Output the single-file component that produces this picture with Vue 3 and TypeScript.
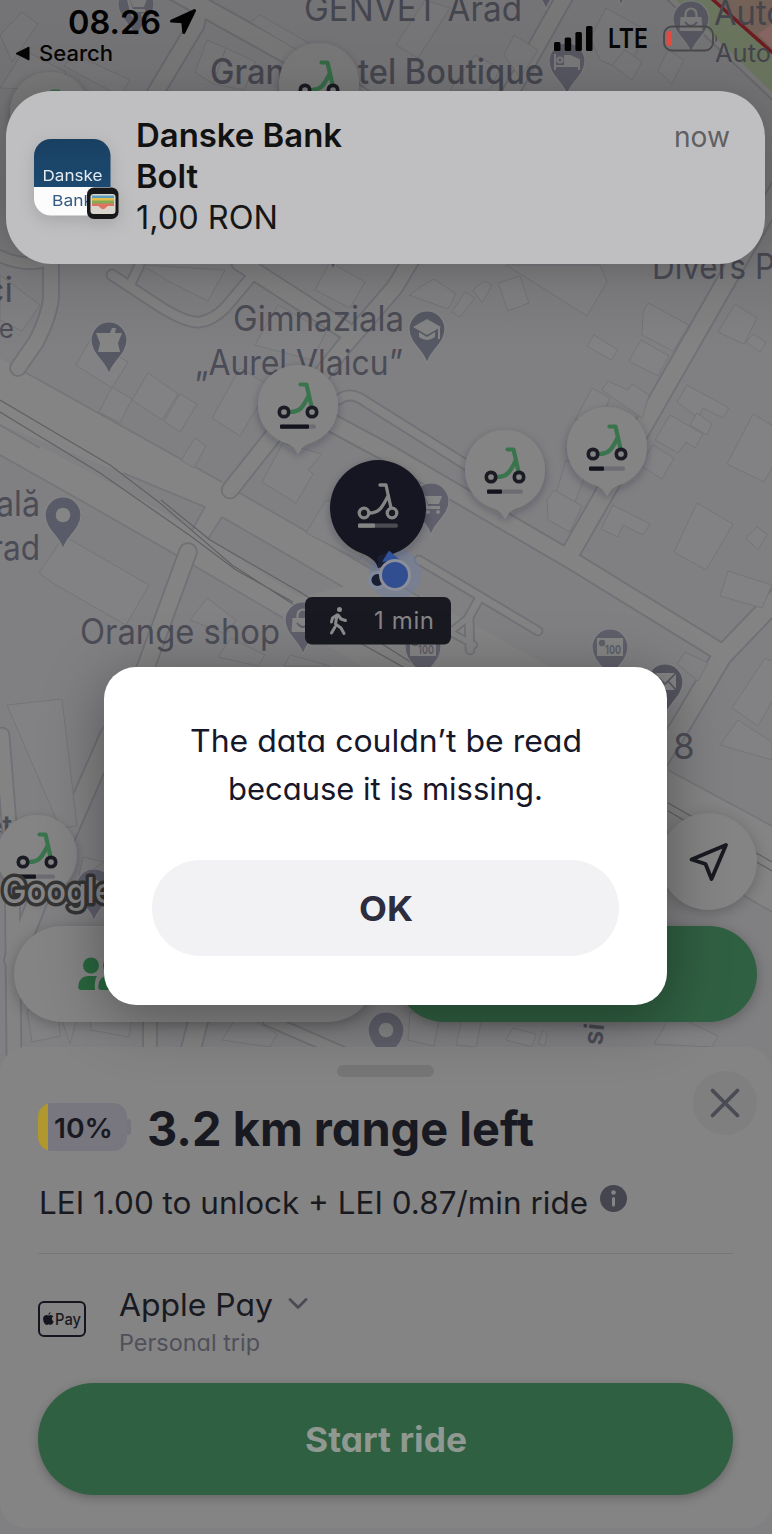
<script setup lang="ts">
import { h, type FunctionalComponent } from 'vue'

interface FitProps {
  text: string
  w: number
  size: number
  weight?: number
  box?: number
  color?: string
  geo?: boolean
}

// A single line of text fitted to a fixed width, with its capitals centred in the box
const FitText: FunctionalComponent<FitProps> = (p) => {
  const box = p.box ?? 40
  return h(
    'svg',
    { width: p.w, height: box, viewBox: `0 0 ${p.w} ${box}`, style: { display: 'block', overflow: 'visible', flex: 'none' } },
    [
      h(
        'text',
        {
          x: 0,
          y: box / 2 + p.size * 0.3636 + (p.geo === false ? 0 : 0.7),
          textLength: p.w,
          lengthAdjust: 'spacingAndGlyphs',
          'font-size': p.size,
          'font-weight': p.weight ?? 400,
          fill: p.color ?? '#191921',
          style: { fontFamily: 'Inter, "Liberation Sans", sans-serif', fontFeatureSettings: p.geo === false ? 'normal' : '"cv11"' },
        },
        p.text,
      ),
    ],
  )
}
FitText.props = { text: String, w: Number, size: Number, weight: Number, box: Number, color: String, geo: { type: Boolean, default: true } } as any

interface Road { d: string; w: number }
const roads: Road[] = [
  { d: 'M172 -10L345 86L440 150', w: 17 },
  { d: 'M205 -20L196 25L157 90L120 160', w: 15 },
  { d: 'M565 -4L519 78L395 287L345 345L230 490', w: 15 },
  { d: 'M240 262L345 330', w: 16 },
  { d: 'M51 250V296Q50 315 36 342L18 368', w: 14 },
  { d: 'M0 256Q20 266 42 262', w: 10 },
  { d: 'M112 275L150 300Q185 324 200 322Q213 320 225 308L252 276', w: 9 },
  { d: 'M130 285L141 262', w: 8 },
  { d: 'M790 170L728 278L642 428L571 552', w: 17 },
  { d: 'M670 -10L780 95', w: 16 },
  { d: 'M280 395L386 452L571 560L722 653', w: 16 },
  { d: 'M338 400Q350 390 366 402L468 466', w: 8 },
  { d: 'M790 585L722 656L681 725L640 790', w: 18 },
  { d: 'M188 552L144 672', w: 16 },
  { d: 'M419 560L538 631', w: 7 },
  { d: 'M479 599L469 617L470 650', w: 7 },
  { d: 'M469 617L450 632L474 645', w: 5 },
  { d: 'M2 735L12 860L14 1060', w: 13 },
  { d: 'M110 735L40 895L14 960', w: 18 },
  { d: 'M150 1014V1060', w: 12 },
  { d: 'M200 1014L188 1060', w: 18 },
  { d: 'M268 1020L360 1060', w: 10 },
]

const buildings: string[] = [
  '0,35 22,12 38,24 12,62', '64,66 74,54 130,80 120,96', '0,88 24,50 66,72 60,90',
  '207,40 226,48 213,84 195,72', '226,48 256,62 244,90 213,84', '250,22 260,15 335,58 330,70',
  '396,45 425,0 450,8 418,58', '504,55 514,35 538,50 520,78', '590,38 606,8 645,30 628,72 600,60',
  '612,65 625,50 642,62 632,80', '658,70 668,50 684,60 672,84', '450,90 475,55 500,68 490,90',
  '76,365 90,340 128,362 112,388', '99,412 112,387 132,399 120,423',
  '132,400 148,373 178,394 162,420', '164,421 180,394 197,404 180,432', '212,418 240,368 270,386 240,436',
  '181,460 195,438 206,446 194,468', '262,482 283,443 322,454 308,470 313,474 296,503',
  '142,265 225,270 208,301 170,282', '315,290 330,262 365,282 350,308', '255,345 278,305 326,332 312,360',
  '0,275 40,305 22,331 0,320', '409,295 422,286 434,279 456,294 448,309',
  '452,312 465,292 475,298 460,317', '473,290 484,281 492,285 482,303',
  '498,283 520,276 529,303 508,311', '506,265 600,265 607,282 587,316', '587,346 594,335 618,350 611,360',
  '643,312 648,303 689,325 673,351 642,335', '629,361 641,340 669,356 658,376',
  '602,390 608,381 628,390 632,384 649,395 642,418 616,400', '575,420 592,388 610,398 602,416',
  '718,332 735,304 757,318 744,344', '746,342 753,334 766,342 760,352',
  '677,402 687,385 729,408 723,418 703,408 698,418', '655,440 670,415 703,434 695,448 686,442 678,453',
  '690,425 697,413 712,424 707,435', '640,465 653,445 674,458 662,479', '727,464 753,414 790,436 764,482',
  '556,494 566,460 588,468 575,502', '547,500 554,490 582,506 570,532 548,520',
  '601,529 613,505 650,524 643,535 623,525 618,537', '674,552 697,503 733,524 706,570',
  '746,538 757,527 767,534 758,550', '720,596 728,571 772,585 762,608',
  '677,664 685,652 708,663 698,681', '732,708 765,658 790,670 758,726', '720,745 738,720 772,742 772,760',
  '39,573 64,536 149,585 126,625 56,585', '190,620 207,598 236,620 226,634',
  '218,657 231,638 265,655 258,666', '284,666 290,655 330,666',
  '7,705 62,699 77,826 60,828', '78,880 83,857 104,862', '27,1010 58,1012 60,1036 32,1042',
  '90,1014 132,1014 129,1037 91,1030', '222,1040 240,1012 277,1034 270,1047', '60,1014 78,1014 70,1044',
  '408,1040 410,1012 440,1014 434,1046', '456,1045 463,1015 482,1018 476,1047',
  '506,1040 513,1028 536,1034 532,1047', '538,1044 543,1030 547,1034 545,1046',
  '654,1044 672,1014 718,1036 712,1047', '306,533 326,500 378,518 360,560',
]

interface Poi { x: number; y: number; k: string; c?: string }
const pois: Poi[] = [
  { x: 136, y: 4, k: 'cart', c: '#62636d' },
  { x: 546, y: -25, k: '' }, { x: 621, y: -29, k: '' }, { x: 333, y: 236, k: '' },
  { x: 567, y: 61, k: 'bed' },
  { x: 691, y: 19, k: 'bag' },
  { x: 109, y: 340, k: 'cup', c: '#565964' },
  { x: 427, y: 329, k: 'grad', c: '#565964' },
  { x: 63, y: 515, k: 'dot', c: '#595c68' },
  { x: 431, y: 501, k: 'cart' },
  { x: 303, y: 620, k: 'bag' },
  { x: 423, y: 647, k: 'cash' },
  { x: 610, y: 647, k: 'cash' },
  { x: 665, y: 682, k: 'mail', c: '#54555f' },
  { x: 94, y: 887, k: 'dot' },
  { x: 386, y: 1030, k: 'dot' },
]

interface Scooter { x: number; y: number; charge: number }
const scooters: Scooter[] = [
  { x: 50, y: 112, charge: 20 }, { x: 319, y: 83, charge: 20 }, { x: 298, y: 405, charge: 29 },
  { x: 505, y: 470, charge: 15 }, { x: 607, y: 447, charge: 15 }, { x: 37, y: 855, charge: 17 },
]
</script>

<template>
  <main class="screen">
    <svg class="map" width="772" height="1534" viewBox="0 0 772 1534">
      <defs>
        <linearGradient id="top" x1="0" y1="0" x2="0" y2="1">
          <stop offset="0" stop-color="#000" stop-opacity=".09" />
          <stop offset=".55" stop-color="#000" stop-opacity=".16" />
          <stop offset="1" stop-color="#000" stop-opacity="0" />
        </linearGradient>
        <filter id="soft" x="-40%" y="-40%" width="180%" height="190%">
          <feDropShadow dx="0" dy="3" stdDeviation="4" flood-color="#20222c" flood-opacity=".3" />
        </filter>
      </defs>
      <rect width="772" height="1534" fill="#808083" />

      <polygon points="0,358 14,366 222,482 238,492 440,606 560,672 560,790 480,740 283,618 178,556 80,500 0,455" fill="#848484" />
      <polygon points="668,770 772,826 772,912 668,855" fill="#848484" />
      <polygon points="0,425 123,473 205,507 192,530 143,500" fill="#808083" />
      <polygon points="222,517 343,587 300,597 208,539" fill="#808083" />
      <g fill="none" stroke="#747579" stroke-width="1.6">
        <path d="M14 366L222 482M238 492L420 597M0 455L80 500L178 556M193 565L283 618" />
        <path d="M123 473L205 507L192 530M222 517L343 587M222 517L208 539M0 425L40 448" />
        <path d="M668 770L772 826M743 895L772 912" />
      </g>
      <path d="M0 400L110 465L160 503L232 565L310 615L412 672M0 412L100 473L192 537L236 570L293 602M161 500L210 540L300 592L420 668M668 803L772 862M668 811L772 871" fill="none" stroke="#5f6064" stroke-width="1.1" />

      <g fill="none" stroke-linejoin="round" stroke-linecap="round">
        <path v-for="r in roads" :key="'c' + r.d" :d="r.d" :stroke-width="r.w + 3.6" stroke="#707175" />
        <path v-for="r in roads" :key="'f' + r.d" :d="r.d" :stroke-width="r.w" stroke="#838384" />
      </g>
      <g fill="#828284" stroke="#747578" stroke-width="1">
        <polygon v-for="b in buildings" :key="b" :points="b" />
      </g>

      <polygon points="676,0 712,0 772,52 772,92" fill="#758168" />
      <polygon points="712,0 772,0 772,52" fill="#7f6b60" />
      <polygon points="758,34 772,24 772,48" fill="#946f6d" />
      <path d="M711 -2L774 54" stroke="#7b1e24" stroke-width="3.4" />

      <g class="label" font-size="35">
        <text x="304" y="20.500" textLength="218" lengthAdjust="spacingAndGlyphs">GENVET Arad</text>
        <text x="210" y="83.500" textLength="334" lengthAdjust="spacingAndGlyphs" font-weight="500">Grand Hotel Boutique</text>
        <text x="652" y="279" textLength="123" lengthAdjust="spacingAndGlyphs">Divers P</text>
        <text x="233" y="331" textLength="171" lengthAdjust="spacingAndGlyphs">Gimnaziala</text>
        <text x="195" y="374.500" textLength="208" lengthAdjust="spacingAndGlyphs">„Aurel Vlaicu”</text>
        <text x="714" y="25" font-size="34" textLength="72" lengthAdjust="spacingAndGlyphs">Auto</text>
        <text x="715" y="62" font-size="25" textLength="56" lengthAdjust="spacingAndGlyphs">Auto</text>
        <text x="13" y="302" text-anchor="end">ci</text>
        <text x="14" y="338" font-size="26" text-anchor="end">e</text>
        <text x="-4" y="516" textLength="44" lengthAdjust="spacingAndGlyphs">ală</text>
        <text x="-9" y="560" textLength="49" lengthAdjust="spacingAndGlyphs">rad</text>
        <text x="80" y="643.500" textLength="200" lengthAdjust="spacingAndGlyphs">Orange shop</text>
        <text x="673" y="759">8</text>
        <text x="12" y="835" font-size="27" font-weight="600" text-anchor="end">et</text>
        <text transform="translate(602 1046) rotate(-84)" font-size="27" font-weight="600">si</text>
      </g>

      <g v-for="p in pois" :key="`${p.x}-${p.y}`" :transform="`translate(${p.x} ${p.y})`">
        <path d="M0 35C-2 22-18 15-18 0A18 18 0 0 1 18 0C18 15 2 22 0 35Z" :fill="p.c ?? '#5e5f6a'" stroke="#858588" stroke-width="1.2" />
        <circle v-if="p.k === 'dot'" r="7.3" fill="#858585" />
        <g v-if="p.k === 'cart'" fill="#858585">
          <path d="M-12-7H-7L-3 5H9V8H-6L-9-4H-12ZM-6-5H11L8 3H-3Z" /><circle cx="-3" cy="11" r="2" /><circle cx="7" cy="11" r="2" />
        </g>
        <g v-if="p.k === 'bed'" fill="none" stroke="#858585" stroke-width="2">
          <path d="M-12-7V9M-12 5H12M12 9V-1L3-5H-2V4" /><circle cx="-7" cy="-1" r="2.6" /><path d="M-1-4H3L11 0V4H-1Z" fill="#858585" />
        </g>
        <g v-if="p.k === 'bag'">
          <path d="M-10.500-2H10.500L11.500 12H-11.500Z" fill="#858585" />
          <path d="M-5.500 0V-5A5.500 5.500 0 0 1 5.500-5V0" fill="none" stroke="#858585" stroke-width="2.2" />
          <path d="M-6 3Q0 11 6 3" fill="none" stroke="#5e5f6a" stroke-width="2" />
        </g>
        <path v-if="p.k === 'cup'" d="M-13-7H1L3-12L7-12L6-7H13L9 3L11 12H-11L-9 3Z" fill="#858585" />
        <g v-if="p.k === 'grad'" fill="#858585">
          <path d="M0-10L14-2L0 6L-14-2Z" /><path d="M-8 3L0 8L8 3V8Q0 14-8 8Z" /><path d="M11-2H13V10H11Z" />
        </g>
        <g v-if="p.k === 'cash'">
          <rect x="-13" y="-9" width="26" height="18" fill="#858585" /><circle cx="-8" cy="-4" r="3.200" fill="#5e5f6a" />
          <text x="-5" y="6.500" class="hundred" textLength="16" lengthAdjust="spacingAndGlyphs">100</text>
        </g>
        <g v-if="p.k === 'mail'">
          <rect x="-11" y="-9" width="22" height="17" fill="#858585" /><path d="M-11-9L0 2L11-9M-11 8L-3-1M11 8L3-1" fill="none" stroke="#54555f" stroke-width="1.6" />
        </g>
      </g>

      <g v-for="s in scooters" :key="`s${s.x}`" :transform="`translate(${s.x} ${s.y})`">
        <path d="M0 49C-3 44-5 40-14 37.500A40 40 0 1 1 14 37.500C5 40 3 44 0 49Z" fill="#848484" filter="url(#soft)" />
        <g fill="none" stroke-width="4.200" stroke-linecap="round" stroke-linejoin="round" stroke="#39744d">
          <path d="M2.500-20.500H8.500L13.500 1.500M-8 7C2 7 5 2 10.500-9" />
          <circle cx="-14" cy="7" r="4.700" stroke="#1b1b25" stroke-width="3.700" fill="#848484" />
          <circle cx="14" cy="7" r="4.700" stroke="#1b1b25" stroke-width="3.700" fill="#848484" />
        </g>
        <rect x="-18" y="19.500" width="36" height="4.200" rx="2" fill="#6c6c73" />
        <rect x="-18" y="19.500" :width="s.charge" height="4.200" rx="1" fill="#14141e" />
      </g>

      <circle cx="395" cy="574" r="26" fill="#6f7d9e" opacity=".5" />
      <g transform="translate(378 508)">
        <path d="M0 60C-2 53-7 49-17 45A48 48 0 1 1 17 45C7 49 2 53 0 60Z" fill="#191921" filter="url(#soft)" />
        <g fill="none" stroke-width="3.300" stroke-linecap="round" stroke-linejoin="round" stroke="#858585">
          <path d="M2-23H8L13 0M-9 5C1 5 4 0 10-12" />
          <circle cx="-14" cy="5" r="4.800" fill="#191921" /><circle cx="14" cy="5" r="4.800" fill="#191921" />
        </g>
        <rect x="-20" y="15.500" width="40" height="4.200" rx="2" fill="#4b4b52" />
        <rect x="-20" y="15.500" width="17" height="4.200" rx="1" fill="#858585" />
      </g>
      <circle cx="377.500" cy="580" r="7.800" fill="#191e32" stroke="#7f879a" stroke-width="3.500" />
      <path d="M378 568V556L388 552V566Z" fill="#191e32" />
      <path d="M382 562L389 550.500L400 560Z" fill="#30529a" />
      <circle cx="395" cy="575" r="14.500" fill="#314e91" stroke="#8c8f99" stroke-width="3" />

      <rect x="305" y="597" width="146" height="47.500" rx="7" fill="#191921" />
      <g fill="none" stroke="#8b8b8d" stroke-width="3" stroke-linecap="round" stroke-linejoin="round">
        <circle cx="339.500" cy="609.500" r="1.500" fill="#8b8b8d" stroke-width="2" />
        <path d="M337 615L335.500 624L341 628L344 633.500M335 627L331.500 633M337 615L332.500 618L331.500 622M338 615L341 619L345.500 620.500" />
      </g>
      <text x="374" y="629" class="walk" textLength="60">1 min</text>
      <text x="2" y="903" class="google" textLength="112" lengthAdjust="spacingAndGlyphs">Google</text>
      <rect width="772" height="350" fill="url(#top)" />
    </svg>

    <header class="status">
      <div class="status-left">
        <div class="clock">
          <FitText text="08.26" :w="93" :size="32.5" :weight="600" :box="32" color="#030303" :geo="false" />
          <svg width="28" height="28" viewBox="0 0 28 28"><path d="M25.500 2.500L14.800 24.500L13.800 13.800L2.500 13Z" fill="#030303" stroke="#030303" stroke-width="3" stroke-linejoin="round" /></svg>
        </div>
        <div class="back">
          <svg width="16" height="15" viewBox="0 0 16 15"><path d="M1 7.500L14 1V14Z" fill="#050505" stroke="#050505" stroke-linejoin="round" /></svg>
          <FitText text="Search" :w="74" :size="21.5" :weight="500" :box="24" color="#050505" :geo="false" />
        </div>
      </div>
      <div class="status-right">
        <svg width="39" height="25" viewBox="0 0 39 25" fill="#030303">
          <rect y="16" width="6.500" height="9" rx="1.500" /><rect x="10.700" y="11.500" width="6.500" height="13.500" rx="1.500" />
          <rect x="21.400" y="6" width="6.500" height="19" rx="1.500" /><rect x="32" width="6.500" height="25" rx="1.500" />
        </svg>
        <FitText text="LTE" :w="40" :size="26.5" :weight="600" :box="28" color="#060606" :geo="false" />
        <svg width="56" height="27" viewBox="0 0 56 27">
          <rect x="1" y="1.500" width="49" height="24" rx="8" fill="none" stroke="#484848" stroke-width="1.800" />
          <rect x="3.500" y="6" width="5.500" height="15" rx="2.500" fill="#e4493f" /><path d="M52.500 9Q55.500 13.500 52.500 18Z" fill="#484848" />
        </svg>
      </div>
    </header>

    <section class="notice">
      <svg class="bank" width="86" height="82" viewBox="0 0 86 82">
        <defs>
          <clipPath id="tile"><rect width="76.500" height="76.500" rx="17" /></clipPath>
          <linearGradient id="navy" x1="0" y1="0" x2="0" y2="1"><stop offset="0" stop-color="#194062" /><stop offset="1" stop-color="#1c4970" /></linearGradient>
        </defs>
        <g clip-path="url(#tile)">
          <rect width="77" height="48" fill="url(#navy)" /><rect y="48" width="77" height="29" fill="#fcfcfd" />
          <text x="8.500" y="41.500" class="tile-text" fill="#e4eaf0" textLength="60" lengthAdjust="spacingAndGlyphs">Danske</text>
          <text x="18" y="67" class="tile-text" fill="#335b82" textLength="41" lengthAdjust="spacingAndGlyphs">Bank</text>
        </g>
        <rect x="53" y="48.500" width="31.500" height="31.500" rx="7" fill="#17181a" />
        <rect x="56.500" y="55" width="25" height="20" rx="3" fill="#d9d5cc" />
        <path d="M58 56.500H80V60H58Z" fill="#5b9fc0" /><path d="M58 59H80V62.500H58Z" fill="#e4bd48" /><path d="M58 61.500H80V65H58Z" fill="#83aa55" />
        <path d="M58 64.500H80V67H74Q73 67 72 68.500Q69 72 66 68.500Q65 67 64 67H58Z" fill="#e07263" />
      </svg>
      <div class="notice-lines">
        <FitText text="Danske Bank" :w="206" :size="32" :weight="600" :box="41" color="#121213" :geo="false" />
        <FitText text="Bolt" :w="62" :size="32" :weight="600" :box="41" color="#121213" :geo="false" />
        <FitText text="1,00 RON" :w="142" :size="32" :box="41" color="#161617" :geo="false" />
      </div>
      <FitText class="when" text="now" :w="56" :size="28" :box="41" color="#606062" :geo="false" />
    </section>

    <button class="locate" aria-label="My location">
      <svg width="42" height="42" viewBox="0 0 42 42"><path d="M38 4L3.500 18.500L17.500 23L23.500 38Z" fill="none" stroke="#191921" stroke-width="3.800" stroke-linejoin="round" /></svg>
    </button>

    <div class="actions">
      <div class="pill pale">
        <svg width="52" height="34" viewBox="0 0 52 34" fill="#29663e">
          <circle cx="13" cy="8.500" r="8" /><path d="M10 19H19Q16 24 17 33H3Q0 33 0.300 29Q1.500 19 10 19Z" />
          <circle cx="33" cy="8.500" r="8" /><path d="M29 19H38Q46 20 47 29Q47 33 44 33H23Q20 33 20.300 29Q21.500 19 29 19Z" />
        </svg>
      </div>
      <div class="pill green"></div>
    </div>

    <section class="sheet">
      <div class="handle"></div>
      <button class="close" aria-label="Close">
        <svg width="32" height="32" viewBox="0 0 32 32"><path d="M3.500 3.500L28.500 28.500M28.500 3.500L3.500 28.500" stroke="#4b4b55" stroke-width="3.800" stroke-linecap="round" /></svg>
      </button>
      <div class="range">
        <div class="battery"><span class="level"></span><FitText text="10%" :w="59" :size="27" :weight="600" :box="48" /></div>
        <span class="nub"></span>
        <FitText text="3.2 km range left" :w="387" :size="48" :weight="700" :box="49" />
      </div>
      <div class="price">
        <FitText text="LEI 1.00 to unlock + LEI 0.87/min ride" :w="549" :size="31" />
        <svg class="info" width="27" height="27" viewBox="0 0 27 27">
          <circle cx="13.500" cy="13.500" r="13.500" fill="#45454f" /><circle cx="13.500" cy="7.500" r="2.300" fill="#858585" /><rect x="12" y="12" width="3" height="9.500" rx="1.500" fill="#858585" />
        </svg>
      </div>
      <hr />
      <div class="payment">
        <div class="card">
          <svg width="11" height="13" viewBox="0 0 11 13" fill="#15151f"><path d="M5.300 3Q5.300.8 7.500 0Q7.700 2.200 5.300 3ZM5.500 3.600Q6.700 3 8 3Q9.500 3.200 10.300 4.300Q8.700 5.300 9 7.200Q9.200 8.800 10.700 9.500Q9.500 12.700 8 12.700Q6.800 12.700 5.700 12.200Q4.500 12.700 3.500 12.900Q1.800 12.900.7 10Q-1 5 1.800 3.500Q3.500 2.700 5.500 3.600Z" /></svg>
          <FitText text="Pay" :w="26" :size="16.5" :weight="500" :box="30" :geo="false" />
        </div>
        <div class="method">
          <div class="method-name">
            <FitText text="Apple Pay" :w="154" :size="31" :box="42" />
            <svg width="20" height="14" viewBox="0 0 20 14"><path d="M2 2.500L10 10.500L18 2.500" fill="none" stroke="#4b4b55" stroke-width="2.800" stroke-linecap="round" stroke-linejoin="round" /></svg>
          </div>
          <FitText text="Personal trip" :w="141" :size="22.5" :box="34" color="#50505a" />
        </div>
      </div>
      <button class="start"><FitText text="Start ride" :w="162" :size="34.5" :weight="700" color="#8f9891" /></button>
    </section>

    <section class="dialog" role="alertdialog">
      <FitText text="The data couldn’t be read" :w="392" :size="31" :box="48" color="#17172a" />
      <FitText text="because it is missing." :w="315" :size="31" :box="48" color="#17172a" />
      <button class="ok"><FitText text="OK" :w="54" :size="34.5" :weight="700" color="#2c2e3e" /></button>
    </section>
  </main>
</template>

<style scoped>
.screen {
  position: relative;
  width: 772px;
  height: 1534px;
  overflow: hidden;
  display: flex;
  flex-direction: column;
  justify-content: flex-end;
  background: #75747b;
  font-family: Inter, "Liberation Sans", sans-serif;
}
button { border: 0; padding: 0; margin: 0; font: inherit; display: flex; align-items: center; justify-content: center; }
svg { display: block; flex: none; }
.map { position: absolute; inset: 0; }
.label { fill: #4c4c56; font-family: Inter, "Liberation Sans", sans-serif; }
.hundred { fill: #5e5f6a; font-size: 12px; font-weight: 700; font-family: Inter, sans-serif; }
.walk { fill: #858587; font-size: 24px; font-family: Inter, sans-serif; }
.google {
  fill: #858585;
  stroke: #343434;
  stroke-width: 7px;
  paint-order: stroke;
  stroke-linejoin: round;
  font-size: 35px;
  font-weight: 500;
  font-family: Inter, sans-serif;
}
.tile-text { font-size: 15px; font-weight: 400; font-family: Inter, sans-serif; }

.status {
  position: absolute;
  inset: 0 0 auto 0;
  display: flex;
  justify-content: space-between;
  padding: 6px 53px 0 15px;
}
.clock { display: flex; align-items: center; gap: 8px; padding-left: 53px; }
.back { display: flex; align-items: center; gap: 8px; margin-top: 3px; }
.status-right { display: flex; align-items: center; gap: 15px; height: 64px; }

.notice {
  position: absolute;
  left: 6px;
  top: 91px;
  width: 759px;
  height: 173px;
  box-sizing: border-box;
  padding: 24px 35px 0 28px;
  display: flex;
  border-radius: 46px;
  background: #bfbfc1;
  box-shadow: 0 4px 28px rgba(0, 0, 0, 0.14);
}
.bank { margin: 24px 16px 0 0; filter: drop-shadow(0 5px 8px rgba(0, 0, 0, 0.13)); }
.notice-lines { flex: 1; }
.when { margin-top: 1px; }

.locate {
  align-self: flex-end;
  width: 97px;
  height: 97px;
  margin: 0 15px 16px 0;
  border-radius: 50%;
  background: #848484;
  box-shadow: 0 3px 14px rgba(0, 0, 0, 0.24);
  position: relative;
}
.actions { position: relative; display: flex; gap: 20px; padding: 0 15px 25px 14px; }
.pill { flex: 1 1 0; width: 0; height: 96px; border-radius: 48px; display: flex; align-items: center; box-shadow: 0 3px 14px rgba(0, 0, 0, 0.26); }
.pale { background: #848484; }
.pale svg { margin-left: 64px; }
.green { background: #306042; }

.sheet {
  position: relative;
  display: flex;
  flex-direction: column;
  height: 481px;
  box-sizing: border-box;
  margin-bottom: 6px;
  padding: 18px 39px 0 38px;
  border-radius: 26px;
  background: #848484;
}
.handle { align-self: center; width: 97px; height: 12px; border-radius: 6px; background: #767676; }
.close { position: absolute; right: 15.500px; top: 24px; width: 64px; height: 64px; border-radius: 50%; background: #7f7f7f; }
.range { display: flex; align-items: center; height: 48px; margin-top: 26px; }
.battery { display: flex; width: 89px; height: 48px; border-radius: 14px; overflow: hidden; background: #78777f; }
.level { width: 9.500px; margin-right: 6px; background: #b0982f; }
.nub { width: 4px; height: 16px; margin-right: 16px; border-radius: 0 3px 3px 0; background: #75757b; }
.price { display: flex; height: 40px; margin: 31px 0 0 1px; }
.info { margin: 2.500px 0 0 12px; }
hr { width: 100%; height: 1.500px; border: 0; margin: 30.500px 0 0; background: #777779; }
.payment { display: flex; align-items: center; height: 77px; margin-top: 28px; }
.card { display: flex; align-items: center; justify-content: center; gap: 1px; width: 48px; height: 36px; box-sizing: border-box; border: 2px solid #15151f; border-radius: 6px; margin-top: -4px; }
.method { margin-left: 33px; }
.method-name { display: flex; align-items: center; gap: 15px; }
.start { width: 100%; height: 112px; margin-top: 24px; border-radius: 56px; background: #306042; box-shadow: 0 3px 10px rgba(0, 0, 0, 0.24); }

.dialog {
  position: absolute;
  left: 104px;
  top: 667px;
  width: 563px;
  height: 338px;
  box-sizing: border-box;
  padding: 49px 48px 0;
  display: flex;
  flex-direction: column;
  align-items: center;
  border-radius: 32px;
  background: #fff;
  box-shadow: 0 12px 60px rgba(0, 0, 0, 0.36);
}
.ok { width: 467px; height: 96px; margin-top: 48px; border-radius: 48px; background: #f2f2f5; }
</style>

<style>
body { margin: 0; }
</style>
